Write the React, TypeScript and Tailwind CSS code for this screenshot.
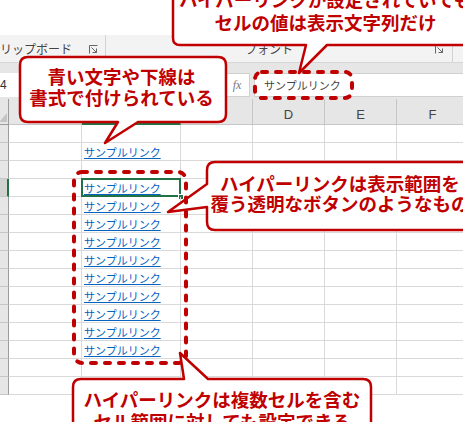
const ROWS = 15;
const isLink = (r: number) => r === 1 || (r >= 3 && r <= 12);
const SELECTED = 3;

function Launcher({ className = '' }: { className?: string }) {
  return (
    <svg width="9" height="9" viewBox="0 0 9 9" className={className} fill="none" stroke="#666" strokeWidth="1">
      <path d="M0.5 8.5 V0.5 H8.5" />
      <path d="M2.5 2.5 L7.5 7.5 M7.5 3.5 V7.5 H3.5" />
    </svg>
  );
}

function Sheet() {
  // A-C headers sit under the callout, only D-F show
  const headers = ['', '', '', '', 'D', 'E', 'F'];
  return (
    <div className="grid grid-cols-[9px_73px_99px_72px_72px_72px_72px] text-[#444]">
      {headers.map((h, i) => (
        <div
          key={i}
          className={
            i === 0
              ? 'relative h-[26px] border-r border-b border-[#9b9b9b] bg-[#e6e6e6]'
              : i === 2
                ? 'h-[26px] border-r border-b-2 border-r-[#c6c6c6] border-b-[#217346] bg-[#d2d2d2]'
                : 'flex h-[26px] items-center justify-center border-r border-b border-[#c6c6c6] bg-[#e6e6e6] pt-[7px] font-["Liberation_Sans",sans-serif] text-[13px]'
          }
        >
          {i === 0 ? (
            <svg width="8" height="9" viewBox="0 0 8 9" className="absolute bottom-[2px] right-[1px]">
              <path d="M8 0 V9 H0 Z" fill="#c4c4c4" />
            </svg>
          ) : (
            h
          )}
        </div>
      ))}
      {Array.from({ length: ROWS }).map((_, r) => (
        <Row key={r} r={r} />
      ))}
    </div>
  );
}

function Row({ r }: { r: number }) {
  const sel = r === SELECTED;
  return (
    <>
      <div
        className={
          sel
            ? 'h-[18px] border-b border-r-2 border-b-[#c6c6c6] border-r-[#217346] bg-[#d2d2d2]'
            : 'h-[18px] border-b border-r border-b-[#c6c6c6] border-r-[#9b9b9b] bg-[#e6e6e6]'
        }
      />
      <div className="h-[18px] border-r border-b border-[#d9d9d9]" />
      <div className="relative h-[18px] border-r border-b border-[#d9d9d9]">
        {isLink(r) && (
          <span className="absolute bottom-[0px] left-[2px] text-[11px] leading-[15px] text-[#0563c1] underline underline-offset-[1px]">
            サンプルリンク
          </span>
        )}
        {sel && (
          <>
            <div className="absolute -top-[1px] -left-[1px] -right-[1px] -bottom-[1px] border-2 border-[#217346]" />
            <div className="absolute -right-[4px] -bottom-[4px] h-[6px] w-[6px] border border-white bg-[#217346]" />
          </>
        )}
      </div>
      <div className="h-[18px] border-r border-b border-[#d9d9d9]" />
      <div className="h-[18px] border-r border-b border-[#d9d9d9]" />
      <div className="h-[18px] border-r border-b border-[#d9d9d9]" />
      <div className="h-[18px] border-r border-b border-[#d9d9d9]" />
    </>
  );
}

export default function App() {
  return (
    <div className="relative h-[422px] w-[463px] overflow-hidden bg-white font-['Noto_Sans_CJK_JP','Noto_Sans',sans-serif]">
      {/* Excel window */}
      <div className="w-[469px] pt-[35px]">
        <div className="flex h-[27px] bg-[#f3f3f3] text-[12px] text-[#444]">
          <div className="flex w-[106px] items-center border-r border-[#d2d2d2] py-[3px]">
            <span className="-ml-[12px] whitespace-nowrap">クリップボード</span>
            <Launcher className="ml-[17px] mt-[1px]" />
          </div>
          <div className="flex w-[347px] items-center border-r border-[#d2d2d2]">
            <span className="ml-[139px] whitespace-nowrap">フォント</span>
            <Launcher className="ml-[142px] mt-[1px]" />
          </div>
        </div>
        <div className="h-[10px] border-t border-[#d6d6d6] bg-[#e6e6e6]" />
        <div className="flex h-[27px] items-stretch gap-[4px] bg-[#e6e6e6] pt-[1px] pb-[2px]">
          <div className="flex w-[70px] items-center bg-white font-['Liberation_Sans',sans-serif] text-[12px] text-[#333]">
            <span className="-ml-[8px]">B4</span>
          </div>
          <div className="w-[146px]" />
          <div className="flex w-[26px] items-center justify-center border border-[#d0d0d0] bg-white font-['Liberation_Serif',serif] text-[12px] italic text-[#777]">
            fx
          </div>
          <div className="flex flex-1 items-center border border-[#d0d0d0] bg-white pl-[9px] text-[11px] text-[#444]">
            サンプルリンク
          </div>
        </div>
        <Sheet />
      </div>

      {/* annotation shapes */}
      <svg className="absolute inset-0" width="463" height="422" viewBox="0 0 463 422" fill="none">
        <g stroke="#c00000" strokeWidth="2.5" strokeLinejoin="round" fill="#fff">
          <path d="M180 -20 H471 Q478 -20 478 -13 V38 Q478 45 471 45 H327 L299 73 L306 45 H180 Q173 45 173 38 V-13 Q173 -20 180 -20 Z" />
          <path d="M28 57 H218 Q226 57 226 65 V114 Q226 122 218 122 H138 L105 143 L118 122 H28 Q20 122 20 114 V65 Q20 57 28 57 Z" />
          <path d="M215 162 H478 V230 H215 Q207 230 207 222 V207 L168 212 L207 184 V170 Q207 162 215 162 Z" />
          <path d="M81 379 H184 L180 353 L208 379 H363 Q371 379 371 387 V445 H73 V387 Q73 379 81 379 Z" />
        </g>
        <g stroke="#c00000" strokeWidth="4" strokeLinecap="round" strokeDasharray="5 9">
          <rect x="255" y="72" width="97" height="26" rx="7" />
          <rect x="74" y="172" width="112" height="191" rx="8" />
        </g>
      </svg>

      {/* annotation texts */}
      <div className="absolute left-[173px] top-[-12px] w-[305px] text-center text-[18.5px] font-bold leading-[23px] text-[#c00000]">
        <div className="whitespace-nowrap">ハイパーリンクが設定されていても</div>
        <div className="whitespace-nowrap">セルの値は表示文字列だけ</div>
      </div>
      <div className="absolute left-[20px] top-[66px] w-[203px] text-center text-[18.5px] font-bold leading-[21px] text-[#c00000]">
        <div>青い文字や下線は</div>
        <div>書式で付けられている</div>
      </div>
      <div className="absolute left-[207px] top-[173px] w-[266px] text-center text-[18.5px] font-bold leading-[20px] text-[#c00000]">
        <div className="whitespace-nowrap">ハイパーリンクは表示範囲を</div>
        <div className="whitespace-nowrap">覆う透明なボタンのようなもの</div>
      </div>
      <div className="absolute left-[73px] top-[388px] w-[298px] text-center text-[18.5px] font-bold leading-[22px] text-[#c00000]">
        <div className="whitespace-nowrap">ハイパーリンクは複数セルを含む</div>
        <div className="whitespace-nowrap">セル範囲に対しても設定できる</div>
      </div>
    </div>
  );
}
